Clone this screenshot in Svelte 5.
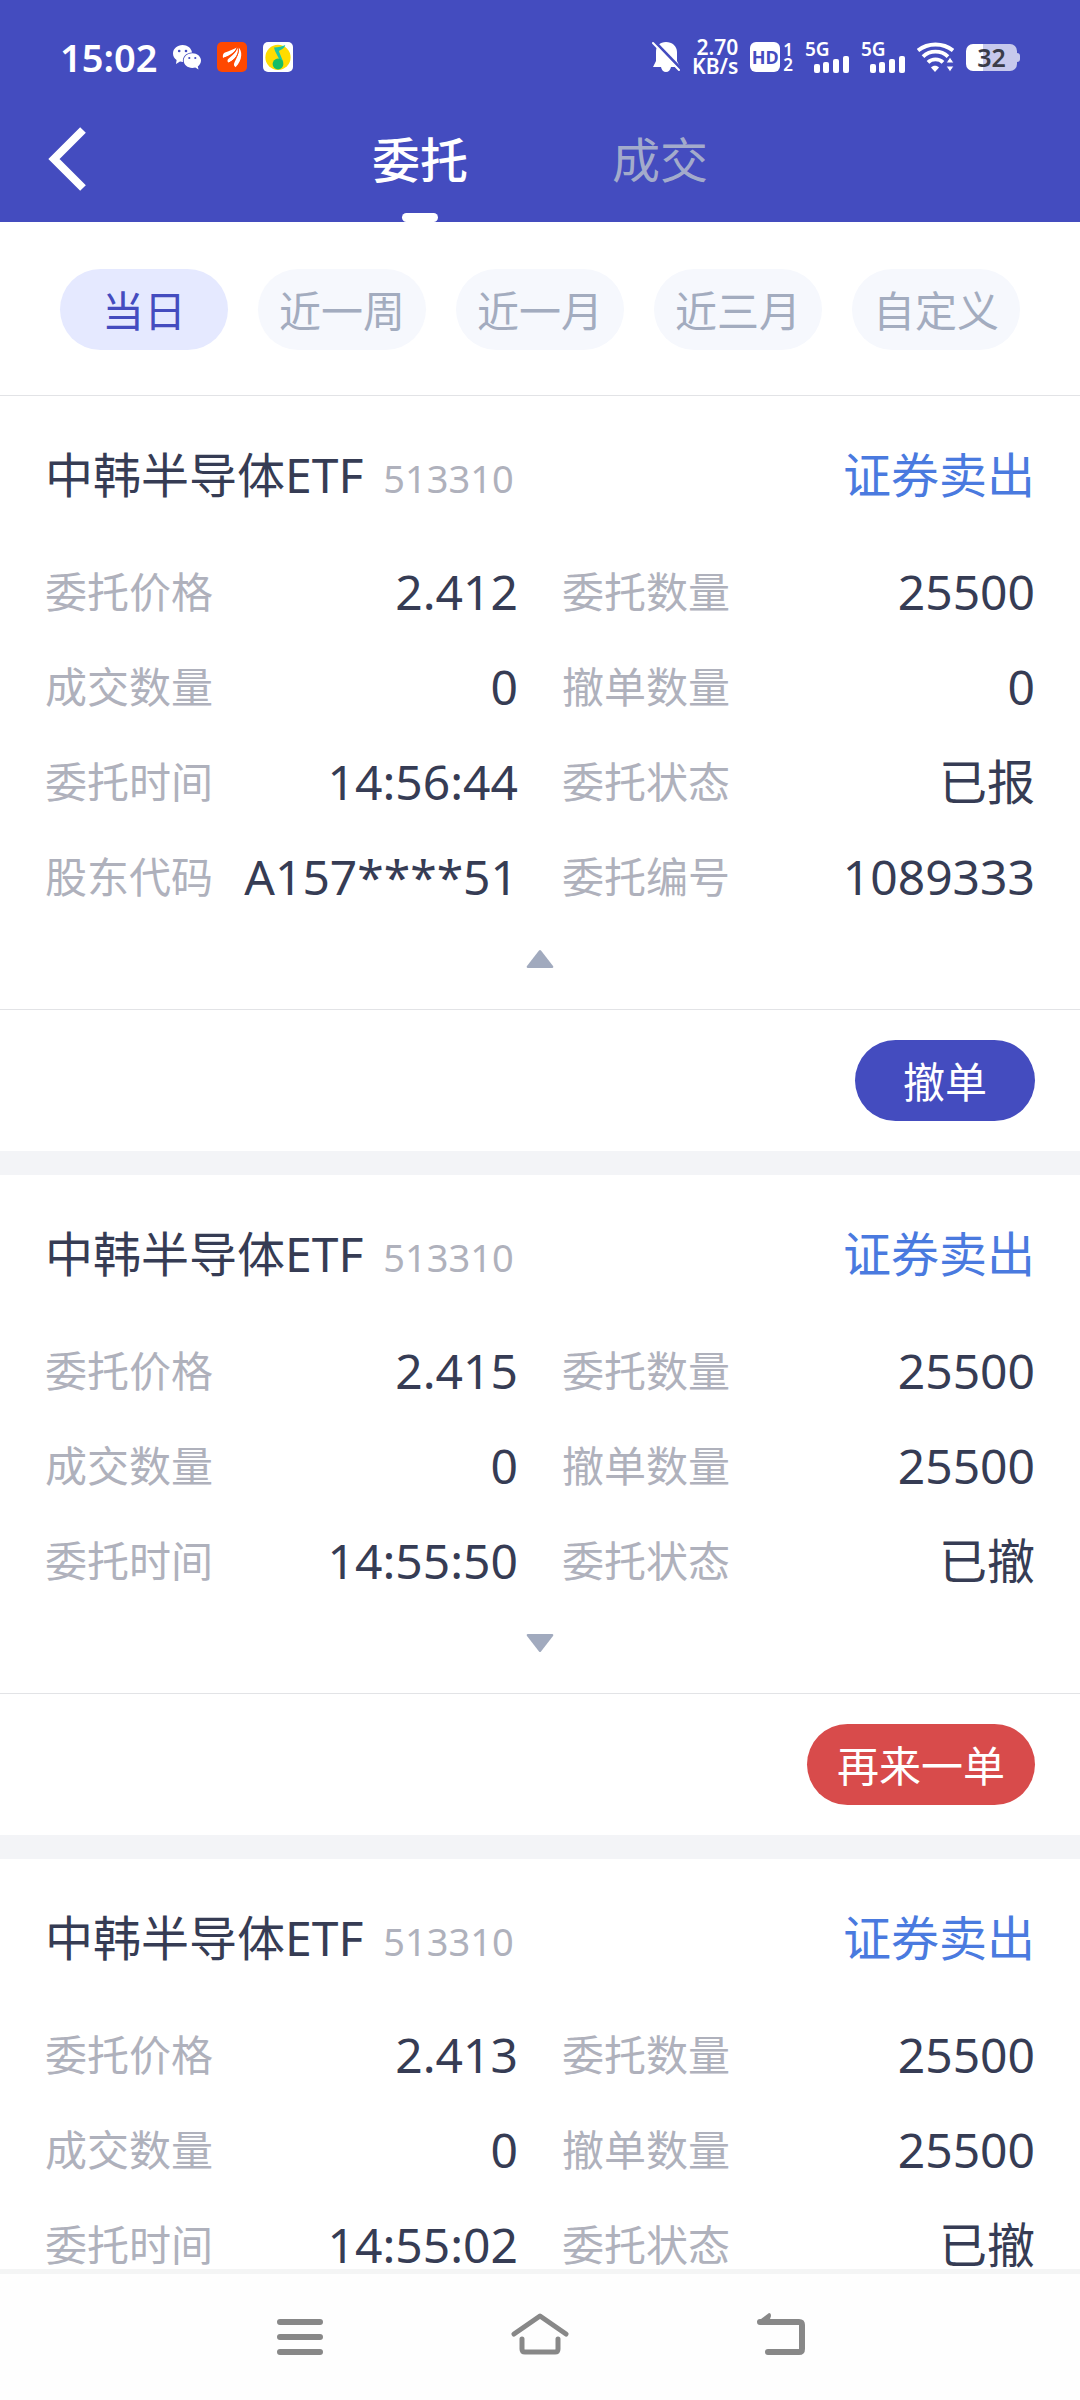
<script>
  const tabs = ['委托', '成交'];
  const ranges = ['当日', '近一周', '近一月', '近三月', '自定义'];

  let activeTab = $state('委托');
  let activeRange = $state('当日');

  let orders = $state([
    {
      name: '中韩半导体ETF',
      code: '513310',
      side: '证券卖出',
      open: true,
      fields: [
        ['委托价格', '2.412'],
        ['委托数量', '25500'],
        ['成交数量', '0'],
        ['撤单数量', '0'],
        ['委托时间', '14:56:44'],
        ['委托状态', '已报'],
      ],
      extra: [
        ['股东代码', 'A157****51'],
        ['委托编号', '1089333'],
      ],
      action: { text: '撤单', kind: 'cancel' },
    },
    {
      name: '中韩半导体ETF',
      code: '513310',
      side: '证券卖出',
      open: false,
      fields: [
        ['委托价格', '2.415'],
        ['委托数量', '25500'],
        ['成交数量', '0'],
        ['撤单数量', '25500'],
        ['委托时间', '14:55:50'],
        ['委托状态', '已撤'],
      ],
      extra: [],
      action: { text: '再来一单', kind: 'again' },
    },
    {
      name: '中韩半导体ETF',
      code: '513310',
      side: '证券卖出',
      open: false,
      fields: [
        ['委托价格', '2.413'],
        ['委托数量', '25500'],
        ['成交数量', '0'],
        ['撤单数量', '25500'],
        ['委托时间', '14:55:02'],
        ['委托状态', '已撤'],
      ],
      extra: [],
      action: null,
    },
  ]);
</script>

{#snippet signal()}
  <span class="signal">
    <span class="net">5G</span>
    <svg class="bars" viewBox="0 0 35 17" fill="#fff">
      <rect x="0" y="8" width="6" height="9" rx="2" />
      <rect x="9" y="6" width="6" height="11" rx="2" />
      <rect x="19" y="3" width="6" height="14" rx="2" />
      <rect x="29" y="0" width="6" height="17" rx="2" />
    </svg>
  </span>
{/snippet}

<div class="app">
  <header>
    <div class="status">
      <div class="left">
        <span class="clock">15:02</span>
        <svg width="28" height="26" viewBox="0 0 28 26">
          <path d="M9.6 1C4.300 1 0 4.700 0 9.400c0 2.700 1.400 4.900 3.600 6.500L3 20l4-2.400c1 .2 2 .4 3 .4-.9-5 3-9.400 9-9.600C18.300 4 14.300 1 9.600 1z" fill="#fff" />
          <path d="M19.300 9.300c-4.800 0-8.600 3.200-8.600 7.300s3.800 7.400 8.600 7.400c1.100 0 2.100-.1 3-.4l3.200 1.800-.7-3c2-1.400 3.200-3.400 3.200-5.800 0-4.100-3.900-7.300-8.700-7.300z" fill="#fff" />
          <g fill="#444cbf">
            <circle cx="6.200" cy="7" r="1.300" /><circle cx="13" cy="7" r="1.300" />
            <circle cx="16.300" cy="14" r="1.100" /><circle cx="22.300" cy="14" r="1.100" />
          </g>
        </svg>
        <svg class="app-icon" width="30" height="30" viewBox="0 0 30 30">
          <rect width="30" height="30" rx="5" fill="#ff4800" />
          <g fill="#fff">
            <path d="M6 16c-.5-3 .2-4.600 2-5.400C12 8.800 15.500 7.500 20 5.400 18 10 13 13.500 6 16z" />
            <path d="M11.200 20.600c-.8-1.500-1-2.600 0-3.700C15 13.500 19 11 20.400 5.400 23.400 11 17.500 18.500 11.200 20.600z" />
            <path d="M18.500 25.200c-1.300-1.200-1.900-2.200-1.400-3.600 2-5.400 5.600-9.500 4.300-16 4 2.500 4.500 13-2.900 19.600z" />
          </g>
          <path d="M6.500 16.300C14 14 18.500 11 20.300 5M12 20.900C18.500 17.500 23 11.500 20.800 5" fill="none" stroke="#ff4800" stroke-width="1" />
        </svg>
        <svg class="app-icon" width="30" height="30" viewBox="0 0 30 30">
          <rect width="30" height="30" rx="5" fill="#fff" />
          <circle cx="15" cy="15.400" r="12.600" fill="#ffdc00" />
          <path d="M11 5.500c4.500-.3 8-.8 11.300-2.500-.7 2.700-3 4.600-6.500 5.900l4.600 11.400-2.200.7-6.200-12z" fill="#1fc6a0" />
          <circle cx="15" cy="22" r="5.400" fill="#15bd66" />
        </svg>
      </div>
      <div class="right">
        <svg width="28" height="32" viewBox="0 0 28 32">
          <path d="M14 1c6 0 11 4 11 10v9l3 6H19c-.6 3-2.500 5-5 5s-4.500-2-5-5H1l3-6v-9C4 5 8 1 14 1z" fill="#fff" />
          <path d="M2 0 28 27" stroke="#444cbf" stroke-width="3" />
          <path d="M1 2 27 29" stroke="#fff" stroke-width="2" stroke-linecap="round" />
        </svg>
        <span class="speed"><span>2.70</span><span>KB/s</span></span>
        <span class="hd"><span class="hd-box">HD</span><span class="sims"><span>1</span><span>2</span></span></span>
        {@render signal()}
        {@render signal()}
        <svg width="37" height="30" viewBox="0 0 37 30">
          <g fill="none" stroke="#fff" stroke-width="3.800">
            <path d="M1 8.500C11 .5 26 .5 36 8.500" />
            <path d="M6 14.600c7-6.600 18-6.600 25 0" />
            <path d="M11 20.300c4-4 11-4 15 0" />
          </g>
          <path d="M14 25.500c2-2.300 6-2.300 8 0L18 30z" fill="#fff" />
          <path d="M33 15l4 6h-8zM33 30l4-6h-8z" fill="#fff" stroke="#444cbf" stroke-width="1" />
        </svg>
        <span class="battery">32</span>
      </div>
    </div>
    <div class="bar">
      <button class="back" aria-label="返回">
        <svg width="38" height="64" viewBox="0 0 38 64" fill="none" stroke="#fff" stroke-width="8">
          <path d="M35 3 6 32 35 61" />
        </svg>
      </button>
      <nav class="tabs">
        {#each tabs as tab}
          <button class="tab" class:active={tab === activeTab} onclick={() => (activeTab = tab)}>{tab}</button>
        {/each}
      </nav>
    </div>
  </header>

  <main>
    <div class="ranges">
      {#each ranges as range}
        <button class="chip" class:active={range === activeRange} onclick={() => (activeRange = range)}>{range}</button>
      {/each}
    </div>

    {#each orders as order}
      <article>
        <div class="title">
          <h2>{order.name}</h2>
          <span class="code">{order.code}</span>
          <span class="side">{order.side}</span>
        </div>
        <dl>
          {#each order.open ? [...order.fields, ...order.extra] : order.fields as [label, value]}
            <div class="field">
              <dt>{label}</dt>
              <dd>{value}</dd>
            </div>
          {/each}
        </dl>
        <button class="toggle" aria-label="展开或收起" aria-expanded={order.open} onclick={() => (order.open = !order.open)}>
          <svg width="28" height="18" viewBox="0 0 28 18" fill="#a1aabe">
            {#if order.open}
              <path d="M13 .6q1-1.200 2 0L27 16q1 2-1 2H2q-2 0-1-2z" />
            {:else}
              <path d="M13 17.400q1 1.200 2 0L27 2q1-2-1-2H2Q0 0 1 2z" />
            {/if}
          </svg>
        </button>
        {#if order.action}
          <div class="actions">
            <button class="action {order.action.kind}">{order.action.text}</button>
          </div>
        {/if}
      </article>
    {/each}
  </main>

  <nav class="system">
    <button aria-label="最近任务">
      <svg width="60" height="48" viewBox="0 0 60 48" fill="none" stroke="#888" stroke-width="6" stroke-linecap="round">
        <path d="M10 9h40M10 24h40M10 39h40" />
      </svg>
    </button>
    <button aria-label="主屏幕">
      <svg width="60" height="48" viewBox="0 0 60 48" fill="none" stroke="#888" stroke-width="5" stroke-linecap="round" stroke-linejoin="round">
        <path d="M4 21 30 3 56 21" />
        <path d="M12 26v10q0 3 3 3h30q3 0 3-3V26" />
      </svg>
    </button>
    <button aria-label="返回上一页">
      <svg width="60" height="48" viewBox="0 0 60 48" fill="none" stroke="#888" stroke-width="6" stroke-linecap="round" stroke-linejoin="round">
        <path d="M18 39h31q3 0 3-3V12q0-3-3-3H10" />
        <path d="M7 9 19 0q2 0 2 3l-2 6z" fill="#888" stroke="none" />
      </svg>
    </button>
  </nav>
</div>

<style>
  :global(body) {
    background: #fff;
  }

  .app {
    display: flex;
    flex-direction: column;
    height: 100vh;
    font-family: 'Noto Sans', 'Noto Sans CJK SC', sans-serif;
    color: #363c54;
  }

  button {
    margin: 0;
    padding: 0;
    border: 0;
    background: none;
    font: inherit;
    color: inherit;
    cursor: pointer;
  }

  svg {
    display: block;
    flex: none;
  }

  header {
    flex: none;
    background: #444cbf;
    color: #fff;
  }

  .status {
    display: flex;
    justify-content: space-between;
    align-items: center;
    height: 114px;
    padding: 0 60px;
  }

  .left,
  .right {
    display: flex;
    align-items: center;
  }

  .left {
    gap: 16px;
  }

  .right {
    gap: 12px;
    font-weight: 600;
  }

  .clock {
    font-size: 38px;
    font-weight: 600;
    line-height: 48px;
  }

  .speed {
    display: flex;
    flex-direction: column;
    align-items: flex-end;
    font-size: 21px;
    line-height: 19px;
  }

  .hd {
    display: flex;
    gap: 3px;
  }

  .hd-box {
    width: 30px;
    border-radius: 6px;
    background: #fff;
    color: #444cbf;
    font-size: 18px;
    font-weight: 700;
    line-height: 30px;
    text-align: center;
  }

  .sims {
    display: flex;
    flex-direction: column;
    font-size: 17px;
    line-height: 15px;
  }

  .signal {
    display: flex;
    flex-direction: column;
    align-items: flex-end;
    width: 44px;
  }

  .net {
    align-self: flex-start;
    font-size: 19px;
    line-height: 14px;
  }

  .bars {
    width: 35px;
    height: 17px;
  }

  .battery {
    position: relative;
    width: 51px;
    height: 27px;
    margin-right: 3px;
    border-radius: 7px;
    background: linear-gradient(90deg, #fff 17px, #c7c9ec 17px);
    color: #3a3c48;
    font-size: 25px;
    line-height: 27px;
    text-align: center;
  }

  .battery::after {
    content: '';
    position: absolute;
    top: 9px;
    right: -3px;
    width: 3px;
    height: 9px;
    border-radius: 0 3px 3px 0;
    background: #c7c9ec;
  }

  .bar {
    display: grid;
    grid-template-columns: 1fr auto 1fr;
    height: 108px;
  }

  .back {
    justify-self: start;
    padding: 0 48px 18px;
  }

  .tabs {
    display: flex;
    gap: 144px;
  }

  .tab {
    position: relative;
    padding-bottom: 16px;
    color: #a3abcb;
    font-size: 48px;
    line-height: 72px;
  }

  .tab.active {
    color: #fff;
    font-weight: 500;
  }

  .tab.active::after {
    content: '';
    position: absolute;
    bottom: 0;
    left: calc(50% - 18px);
    width: 36px;
    height: 9px;
    border-radius: 5px;
    background: #fff;
  }

  main {
    flex: 1;
    min-height: 0;
    overflow: hidden;
  }

  .ranges {
    display: grid;
    grid-template-columns: repeat(5, 1fr);
    gap: 30px;
    padding: 47px 60px 45px;
    border-bottom: 1px solid #e2e3e6;
  }

  .chip {
    height: 81px;
    padding-top: 2px;
    border-radius: 41px;
    background: #f6f8fd;
    color: #a3acbf;
    font-size: 42px;
    line-height: 72px;
  }

  .chip.active {
    background: #e5e9ff;
    color: #444cbf;
  }

  article {
    border-bottom: 24px solid #f3f4f7;
  }

  .title {
    display: flex;
    align-items: baseline;
    box-sizing: border-box;
    height: 148px;
    padding: 31px 45px 0;
    line-height: 96px;
  }

  h2 {
    margin: 0;
    font-size: 48px;
    font-weight: 400;
  }

  .code {
    margin-left: 20px;
    color: #afb1bc;
    font-size: 38px;
  }

  .side {
    margin-left: auto;
    color: #4a7adf;
    font-size: 48px;
  }

  dl {
    display: grid;
    grid-template-columns: 1fr 1fr;
    column-gap: 44px;
    margin: 0;
    padding: 0 45px;
  }

  .field {
    display: flex;
    justify-content: space-between;
    height: 95px;
    line-height: 95px;
  }

  dt {
    color: #afb1bc;
    font-size: 42px;
  }

  dd {
    margin: 0;
    font-size: 48px;
  }

  .toggle {
    display: flex;
    justify-content: center;
    align-items: flex-start;
    width: 100%;
    height: 85px;
    padding-top: 26px;
  }

  .actions {
    display: flex;
    justify-content: flex-end;
    padding: 30px 45px;
    border-top: 1px solid #e2e3e6;
  }

  .action {
    min-width: 180px;
    height: 81px;
    padding: 2px 30px 0;
    border-radius: 41px;
    color: #fff;
    font-size: 42px;
    line-height: 72px;
  }

  .cancel {
    background: #444cbf;
  }

  .again {
    background: #d84b4b;
  }

  .system {
    flex: none;
    display: flex;
    justify-content: center;
    gap: 180px;
    height: 126px;
    border-top: 5px solid #f4f5f5;
    background: #fefefe;
  }
</style>
